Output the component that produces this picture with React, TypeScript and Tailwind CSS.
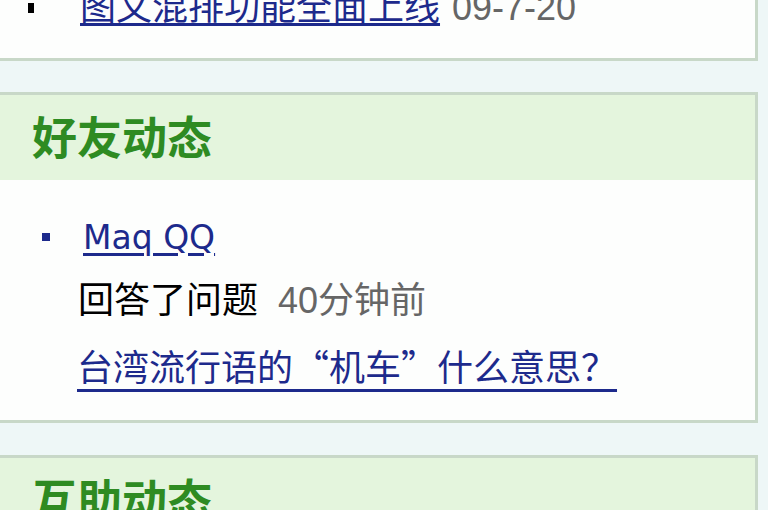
import React from "react";

const cjk = { fontFamily: '"Liberation Sans", "Noto Sans CJK SC", sans-serif' };
const cjkFirst = { fontFamily: '"Noto Sans CJK SC", "Liberation Sans", sans-serif' };

export default function App() {
  return (
    <div className="w-[768px] h-[510px] overflow-hidden bg-[#eef7f7]" style={cjk}>
      {/* Box 1 (cut off at top) */}
      <div className="w-[758px] h-[61px] bg-[#fdfefd] border-b-[3px] border-r-[3px] border-[#c8d8c8] overflow-hidden">
        <div className="flex items-center h-[36px] -mt-[10px] pl-[28px]">
          <span className="w-[6px] h-[10px] bg-black mr-[46px]" />
          <a className="text-[36px] leading-[36px] text-[#1d2a8c] underline decoration-[3px] underline-offset-[3px]">
            图文混排功能全面上线
          </a>
          <span className="text-[36px] leading-[36px] text-[#666] ml-[12px]">09-7-20</span>
        </div>
      </div>

      <div className="h-[31px]" />

      {/* Box 2 */}
      <div className="w-[758px] bg-[#fdfefd] border-t-[3px] border-b-[3px] border-r-[3px] border-[#c8d8c8]">
        <div className="h-[85px] bg-[#e4f5dd] flex items-center pl-[32px] pt-[4px]">
          <h2 className="text-[45px] leading-[45px] font-bold text-[#2e8b22]">好友动态</h2>
        </div>
        <div className="h-[240px] pt-[25px]">
          <div className="flex items-center h-[64px] pl-[42px]">
            <span className="w-[8px] h-[8px] bg-[#1d2a8c] mr-[33px]" />
            <a
              className="text-[33px] leading-[33px] text-[#1d2a8c] underline decoration-[3px] underline-offset-[4px]"
              style={{ fontFamily: '"DejaVu Sans", sans-serif' }}
            >
              Maq QQ
            </a>
          </div>
          <div className="flex items-center h-[64px] pl-[78px]">
            <span className="text-[36px] leading-[36px] text-black">回答了问题</span>
            <span className="text-[36px] leading-[36px] text-[#666] ml-[20px]">40分钟前</span>
          </div>
          <div className="flex items-center h-[64px] pl-[77px]">
            <a
              className="text-[36px] leading-[36px] text-[#1d2a8c] underline decoration-[3px] underline-offset-[8px]"
              style={cjkFirst}
            >
              台湾流行语的“机车”什么意思？
            </a>
          </div>
        </div>
      </div>

      <div className="h-[32px]" />

      {/* Box 3 */}
      <div className="w-[758px] bg-[#fdfefd] border-t-[3px] border-r-[3px] border-[#c8d8c8]">
        <div className="h-[85px] bg-[#e4f5dd] flex items-center pl-[32px] pt-[4px]">
          <h2 className="text-[45px] leading-[45px] font-bold text-[#2e8b22]">互助动态</h2>
        </div>
      </div>
    </div>
  );
}
